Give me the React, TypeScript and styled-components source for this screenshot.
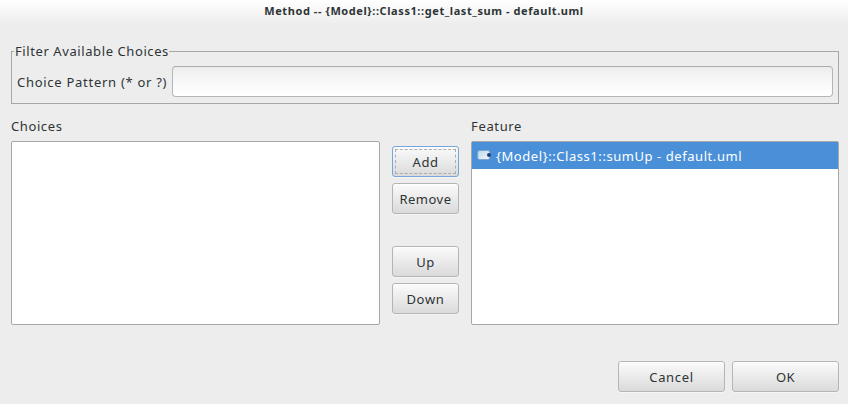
import React from "react";
import styled, { createGlobalStyle } from "styled-components";

const GlobalStyle = createGlobalStyle`
  * { box-sizing: border-box; }
  body {
    margin: 0;
    background: #ededed;
    color: #2e3436;
    font-family: "Noto Sans", "Open Sans", sans-serif;
    font-size: 13px;
  }
`;

const Dialog = styled.main`
  width: 848px;
  height: 404px;
  display: flex;
  flex-direction: column;
  background: #ededed;
  overflow: hidden;
`;

const TitleBar = styled.header`
  height: 30px;
  flex: none;
  display: flex;
  justify-content: center;
  background: linear-gradient(#ffffff, #ededed 24px);
  font-size: 11px;
  font-weight: 700;
  line-height: 22px;
`;

const Label = styled.span<{ $spacing?: number }>`
  white-space: pre;
  letter-spacing: ${(p) => p.$spacing ?? 0.5}px;
`;

const FilterGroup = styled.fieldset`
  margin: 12px 9px 0 11px;
  padding: 0 5px 6px;
  height: 62px;
  border: 1px solid #a7a7a7;
  min-width: 0;
`;

const Legend = styled.legend`
  margin-left: -3px;
  padding: 0 0 0 1px;
  height: 18px;
  line-height: 18px;
`;

const FilterRow = styled.div`
  display: grid;
  grid-template-columns: 155px 661px;
  align-items: center;
  height: 31px;
  margin-top: 6px;
`;

const Entry = styled.input`
  width: 100%;
  height: 31px;
  border: 1px solid #b5b7b7;
  border-top-color: #a9abab;
  border-radius: 4px;
  background: linear-gradient(#ededed, #fafafa 60%, #ffffff);
  outline: none;
`;

const Columns = styled.section`
  display: grid;
  grid-template-columns: 369px 67px 368px;
  column-gap: 12px;
  margin: 12px 9px 0 11px;
  height: 209px;
`;

const ListColumn = styled.div`
  display: flex;
  flex-direction: column;
`;

const ListHeading = styled.div`
  height: 25px;
  line-height: 20px;
`;

const ListBox = styled.div`
  height: 184px;
  border: 1px solid #a7a7a7;
  border-radius: 2px;
  background: #fff;
`;

const SelectedItem = styled.div`
  display: flex;
  align-items: center;
  gap: 4px;
  height: 27px;
  padding-left: 5px;
  background: #4a90d9;
  color: #fff;
`;

const ButtonColumn = styled.div`
  display: flex;
  flex-direction: column;
  gap: 6px;
  padding-top: 30px;
`;

const ButtonGap = styled.div`
  height: 20px;
`;

const Button = styled.button<{ $width: number; $focused?: boolean }>`
  width: ${(p) => p.$width}px;
  height: 31px;
  flex: none;
  padding: 2px;
  display: flex;
  border: 1px solid ${(p) => (p.$focused ? "#75a5d9" : "#b4b6b6")};
  border-radius: 3px;
  background: linear-gradient(#fbfbfb, #dadada);
  box-shadow: inset 0 1px #ffffff, 0 1px #f5f5f5;
  color: inherit;
  font: inherit;
`;

const ButtonFace = styled.span<{ $focused?: boolean }>`
  flex: 1;
  align-self: stretch;
  display: flex;
  align-items: center;
  justify-content: center;
  border: 1px dashed ${(p) => (p.$focused ? "#adadad" : "transparent")};
`;

const Actions = styled.footer`
  display: flex;
  justify-content: flex-end;
  gap: 7px;
  margin: 36px 9px 0 0;
`;

const IconFrame = styled.svg`
  flex: none;
  margin-top: -1px;
`;

function FeatureIcon() {
  return (
    <IconFrame width="15" height="12" viewBox="0 0 15 12" aria-hidden="true">
      <defs>
        <linearGradient id="feature-fill" x1="0" y1="0" x2="1" y2="1">
          <stop offset="0" stopColor="#b9d8f1" />
          <stop offset="1" stopColor="#f7f7f3" />
        </linearGradient>
      </defs>
      <rect x="0.7" y="1.5" width="12" height="9" rx="2" fill="url(#feature-fill)" stroke="#7da6d3" />
      <circle cx="12" cy="6" r="2" fill="#1c3f86" />
    </IconFrame>
  );
}

interface PushButtonProps {
  text: string;
  width?: number;
  spacing?: number;
  focused?: boolean;
}

function PushButton({ text, width = 67, spacing, focused }: PushButtonProps) {
  return (
    <Button type="button" $width={width} $focused={focused}>
      <ButtonFace $focused={focused}>
        <Label $spacing={spacing}>{text}</Label>
      </ButtonFace>
    </Button>
  );
}

export default function App() {
  return (
    <>
      <GlobalStyle />
      <Dialog>
        <TitleBar>
          <Label $spacing={0.58}>{"Method -- {Model}::Class1::get_last_sum - default.uml"}</Label>
        </TitleBar>
        <FilterGroup>
          <Legend>
            <Label $spacing={0.59}>Filter Available Choices</Label>
          </Legend>
          <FilterRow>
            <Label $spacing={0.72}>Choice Pattern (* or ?)</Label>
            <Entry aria-label="Choice Pattern" />
          </FilterRow>
        </FilterGroup>
        <Columns>
          <ListColumn>
            <ListHeading>
              <Label $spacing={0.6}>Choices</Label>
            </ListHeading>
            <ListBox />
          </ListColumn>
          <ButtonColumn>
            <PushButton text="Add" focused />
            <PushButton text="Remove" />
            <ButtonGap />
            <PushButton text="Up" />
            <PushButton text="Down" spacing={0.7} />
          </ButtonColumn>
          <ListColumn>
            <ListHeading>
              <Label $spacing={0.65}>Feature</Label>
            </ListHeading>
            <ListBox>
              <SelectedItem>
                <FeatureIcon />
                <Label $spacing={0.56}>{"{Model}::Class1::sumUp - default.uml"}</Label>
              </SelectedItem>
            </ListBox>
          </ListColumn>
        </Columns>
        <Actions>
          <PushButton text="Cancel" width={107} spacing={0.65} />
          <PushButton text="OK" width={107} />
        </Actions>
      </Dialog>
    </>
  );
}
